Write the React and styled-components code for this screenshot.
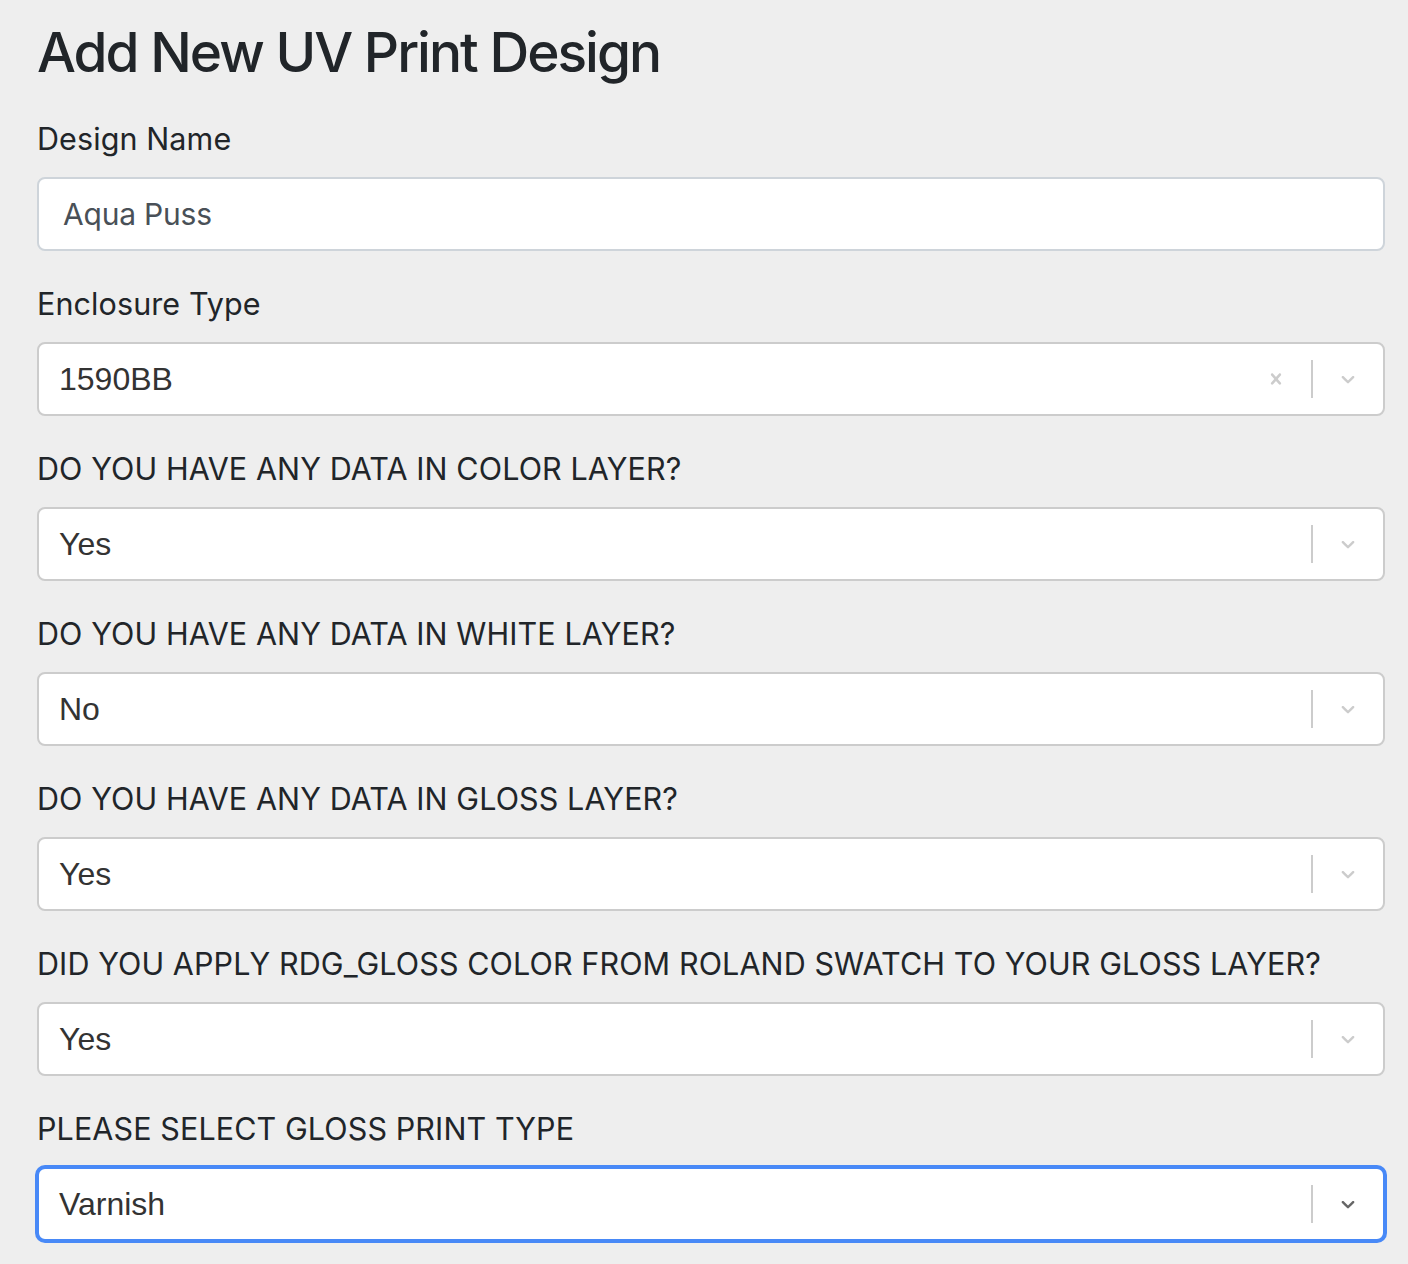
import React from 'react';
import styled, { createGlobalStyle } from 'styled-components';

const GlobalStyle = createGlobalStyle`
  html, body {
    margin: 0;
    padding: 0;
    background: #eeeeee;
  }
  body {
    font-family: Inter, "Noto Sans", sans-serif;
    color: #212529;
  }
`;

const Page = styled.div`
  padding: 19px 23px 40px 37px;
`;

const Title = styled.h1`
  margin: 0 0 30px;
  font-size: 55px;
  line-height: 67px;
  font-weight: 500;
  letter-spacing: -2px;
  color: #212529;
`;

const Form = styled.form`
  display: flex;
  flex-direction: column;
  gap: 30px;
`;

const Group = styled.div`
  display: flex;
  flex-direction: column;
  gap: 16px;
`;

const Label = styled.label`
  font-size: 30.5px;
  line-height: 45px;
  font-weight: 400;
  color: #212529;
  letter-spacing: 0.1px;
`;

const TextInput = styled.input`
  box-sizing: border-box;
  height: 74px;
  width: 100%;
  padding: 0 24px;
  border: 2px solid #ced4da;
  border-radius: 8px;
  background: #fff;
  font-family: Inter, "Noto Sans", sans-serif;
  font-size: 30px;
  color: #495057;
  letter-spacing: -0.2px;
  outline: none;
`;

const Control = styled.div`
  box-sizing: border-box;
  height: 74px;
  display: flex;
  align-items: center;
  background: #fff;
  border: 2px solid ${p => (p.$focused ? '#4889f7' : '#cccccc')};
  box-shadow: ${p => (p.$focused ? '0 0 0 2px #4889f7' : 'none')};
  border-radius: 8px;
`;

const Value = styled.div`
  flex: 1;
  padding: 0 20px;
  font-family: "Liberation Sans", Arial, sans-serif;
  font-size: 32px;
  color: #333333;
`;

const Indicator = styled.div`
  display: flex;
  align-items: center;
  padding: 0 24px;
  color: ${p => (p.$dark ? '#666666' : '#cccccc')};
  svg {
    display: block;
    width: 22px;
    height: 22px;
    fill: currentColor;
  }
`;

const Separator = styled.span`
  align-self: stretch;
  width: 2px;
  margin: 16px 0;
  background: #cccccc;
`;

const ClearIcon = () => (
  <svg viewBox="0 0 20 20" aria-hidden="true">
    <path d="M14.348 14.849c-0.469 0.469-1.229 0.469-1.697 0l-2.651-3.030-2.651 3.029c-0.469 0.469-1.229 0.469-1.697 0-0.469-0.469-0.469-1.229 0-1.697l2.758-3.15-2.759-3.152c-0.469-0.469-0.469-1.228 0-1.697s1.228-0.469 1.697 0l2.652 3.031 2.651-3.031c0.469-0.469 1.228-0.469 1.697 0s0.469 1.229 0 1.697l-2.758 3.152 2.758 3.15c0.469 0.469 0.469 1.229 0 1.698z" />
  </svg>
);

const ChevronIcon = () => (
  <svg viewBox="0 0 20 20" aria-hidden="true">
    <path d="M4.516 7.548c0.436-0.446 1.043-0.481 1.576 0l3.908 3.747 3.908-3.747c0.533-0.481 1.141-0.446 1.574 0 0.436 0.445 0.408 1.197 0 1.615-0.406 0.418-4.695 4.502-4.695 4.502-0.217 0.223-0.502 0.335-0.787 0.335s-0.57-0.112-0.789-0.335c0 0-4.287-4.084-4.695-4.502s-0.436-1.170 0-1.615z" />
  </svg>
);

const Select = ({ value, clearable, focused }) => (
  <Control $focused={focused}>
    <Value>{value}</Value>
    {clearable && (
      <Indicator>
        <ClearIcon />
      </Indicator>
    )}
    <Separator />
    <Indicator $dark={focused}>
      <ChevronIcon />
    </Indicator>
  </Control>
);

const questions = [
  { label: 'DO YOU HAVE ANY DATA IN COLOR LAYER?', value: 'Yes' },
  { label: 'DO YOU HAVE ANY DATA IN WHITE LAYER?', value: 'No' },
  { label: 'DO YOU HAVE ANY DATA IN GLOSS LAYER?', value: 'Yes' },
  { label: 'DID YOU APPLY RDG_GLOSS COLOR FROM ROLAND SWATCH TO YOUR GLOSS LAYER?', value: 'Yes' },
  { label: 'PLEASE SELECT GLOSS PRINT TYPE', value: 'Varnish', focused: true },
];

export default function App() {
  return (
    <>
      <GlobalStyle />
      <Page>
        <Title>Add New UV Print Design</Title>
        <Form onSubmit={e => e.preventDefault()}>
          <Group>
            <Label>Design Name</Label>
            <TextInput defaultValue="Aqua Puss" />
          </Group>
          <Group>
            <Label>Enclosure Type</Label>
            <Select value="1590BB" clearable />
          </Group>
          {questions.map(q => (
            <Group key={q.label}>
              <Label>{q.label}</Label>
              <Select value={q.value} focused={q.focused} />
            </Group>
          ))}
        </Form>
      </Page>
    </>
  );
}
